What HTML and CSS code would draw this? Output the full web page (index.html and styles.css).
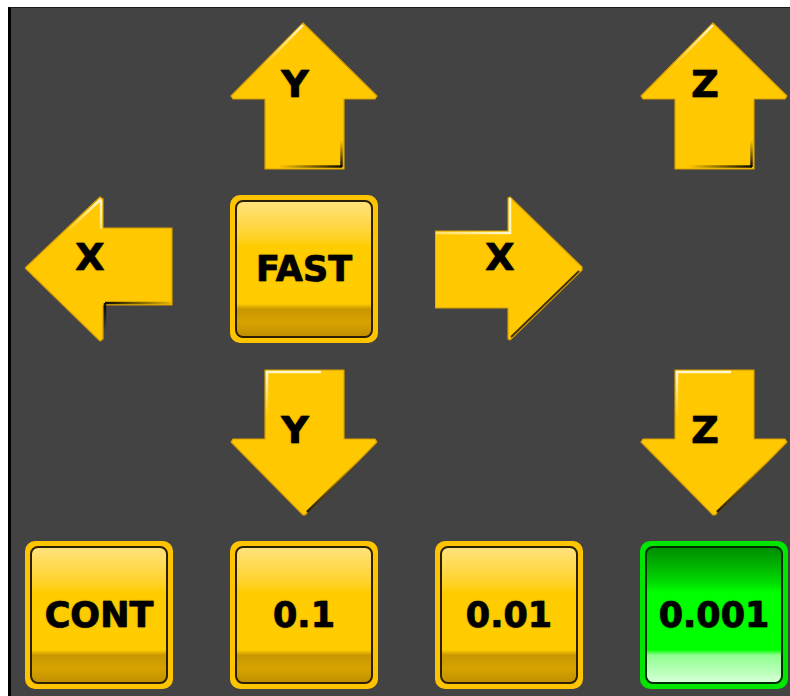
FILE: index.html
```html
<!DOCTYPE html>
<html lang="en">
<head>
    <meta charset="UTF-8">
    <meta name="viewport" content="width=device-width, initial-scale=1.0">
    <title>Jog Panel</title>
    <link rel="stylesheet" href="styles.css">
</head>
<body>
    <svg class="defs" aria-hidden="true">
      <defs>
        <linearGradient id="hlUp" gradientUnits="userSpaceOnUse" x1="72" y1="3" x2="30" y2="45">
          <stop offset="0" stop-color="#fff8d0" stop-opacity="1"/>
          <stop offset="1" stop-color="#fff8d0" stop-opacity="0"/>
        </linearGradient>
        <linearGradient id="shUpB" gradientUnits="userSpaceOnUse" x1="48" y1="0" x2="112" y2="0">
          <stop offset="0" stop-color="#000" stop-opacity="0"/>
          <stop offset="1" stop-color="#000" stop-opacity="0.95"/>
        </linearGradient>
        <linearGradient id="shUpR" gradientUnits="userSpaceOnUse" x1="0" y1="118" x2="0" y2="145">
          <stop offset="0" stop-color="#000" stop-opacity="0"/>
          <stop offset="1" stop-color="#000" stop-opacity="0.95"/>
        </linearGradient>
        <linearGradient id="hlDown" gradientUnits="userSpaceOnUse" x1="37" y1="4" x2="37" y2="50">
          <stop offset="0" stop-color="#fff8d0" stop-opacity="1"/>
          <stop offset="1" stop-color="#fff8d0" stop-opacity="0"/>
        </linearGradient>
        <linearGradient id="shDown" gradientUnits="userSpaceOnUse" x1="128" y1="94" x2="77" y2="144">
          <stop offset="0" stop-color="#000" stop-opacity="0"/>
          <stop offset="1" stop-color="#000" stop-opacity="0.85"/>
        </linearGradient>
        <linearGradient id="hlLeft" gradientUnits="userSpaceOnUse" x1="77" y1="4" x2="40" y2="38">
          <stop offset="0" stop-color="#fff8d0" stop-opacity="1"/>
          <stop offset="1" stop-color="#fff8d0" stop-opacity="0"/>
        </linearGradient>
        <linearGradient id="shLeftB" gradientUnits="userSpaceOnUse" x1="80" y1="0" x2="146" y2="0">
          <stop offset="0" stop-color="#000" stop-opacity="0.95"/>
          <stop offset="1" stop-color="#000" stop-opacity="0.1"/>
        </linearGradient>
        <linearGradient id="shLeftV" gradientUnits="userSpaceOnUse" x1="0" y1="108" x2="0" y2="136">
          <stop offset="0" stop-color="#000" stop-opacity="0.95"/>
          <stop offset="1" stop-color="#000" stop-opacity="0"/>
        </linearGradient>
        <linearGradient id="hlRight" gradientUnits="userSpaceOnUse" x1="0" y1="0" x2="76" y2="0">
          <stop offset="0" stop-color="#fff8d0" stop-opacity="0.5"/>
          <stop offset="1" stop-color="#fff8d0" stop-opacity="1"/>
        </linearGradient>
      </defs>
    </svg>

    <div class="panel">
      <div class="pad">
        <div class="cell"></div>

        <div class="cell arrow">
          <svg viewBox="0 0 148 148">
            <polygon class="body" points="73,1 147,74 145,77 114,77 114,147 35,147 35,77 3,77 1,74"/>
            <polyline class="hl" stroke="url(#hlUp)" points="28,49 72,4"/>
            <line x1="48" y1="144.5" x2="112" y2="144.5" stroke="url(#shUpB)" stroke-width="2.5"/>
            <line x1="111.5" y1="118" x2="111.5" y2="145" stroke="url(#shUpR)" stroke-width="2.5"/>
          </svg>
          <span class="label">Y</span>
        </div>

        <div class="cell"></div>

        <div class="cell arrow">
          <svg viewBox="0 0 148 148">
            <polygon class="body" points="73,1 147,74 145,77 114,77 114,147 35,147 35,77 3,77 1,74"/>
            <polyline class="hl" stroke="url(#hlUp)" points="28,49 72,4"/>
            <line x1="48" y1="144.5" x2="112" y2="144.5" stroke="url(#shUpB)" stroke-width="2.5"/>
            <line x1="111.5" y1="118" x2="111.5" y2="145" stroke="url(#shUpR)" stroke-width="2.5"/>
          </svg>
          <span class="label">Z</span>
        </div>

        <div class="cell arrow">
          <svg viewBox="0 0 148 148">
            <polygon class="body" points="0,73 75,2 78,4 78,33 147,33 147,110 78,110 78,144 75,146"/>
            <polyline class="hl" stroke="url(#hlLeft)" points="40,38 75,5 76,6 76,33"/>
            <line x1="80" y1="108" x2="146" y2="108" stroke="url(#shLeftB)" stroke-width="2.5"/>
            <line x1="80" y1="108" x2="80" y2="136" stroke="url(#shLeftV)" stroke-width="2.5"/>
          </svg>
          <span class="label">X</span>
        </div>

        <div class="cell">
          <div class="btn">
            <div class="btn-face">FAST</div>
          </div>
        </div>

        <div class="cell arrow">
          <svg viewBox="0 0 148 148">
            <polygon class="body" points="0,36 73,36 73,3 75,2 147,72 147,75 75,145 73,144 73,113 0,113"/>
            <polyline class="hl" stroke="url(#hlRight)" points="2,38 75,38 75,4"/>
            <line x1="144" y1="76" x2="76" y2="142" stroke="#000" stroke-opacity="0.75" stroke-width="1.8"/>
          </svg>
          <span class="label">X</span>
        </div>

        <div class="cell"></div>

        <div class="cell"></div>

        <div class="cell arrow">
          <svg viewBox="0 0 148 148">
            <polygon class="body" points="35,2 114,2 114,71 145,71 147,74 75,147 73,147 1,74 3,71 35,71"/>
            <polyline class="hl" stroke="url(#hlDown)" points="37,50 37,4 90,4"/>
            <line x1="128" y1="94" x2="77" y2="144" stroke="url(#shDown)" stroke-width="2.5"/>
          </svg>
          <span class="label">Y</span>
        </div>

        <div class="cell"></div>

        <div class="cell arrow">
          <svg viewBox="0 0 148 148">
            <polygon class="body" points="35,2 114,2 114,71 145,71 147,74 75,147 73,147 1,74 3,71 35,71"/>
            <polyline class="hl" stroke="url(#hlDown)" points="37,50 37,4 90,4"/>
            <line x1="128" y1="94" x2="77" y2="144" stroke="url(#shDown)" stroke-width="2.5"/>
          </svg>
          <span class="label">Z</span>
        </div>

        <div class="cell">
          <div class="btn">
            <div class="btn-face">CONT</div>
          </div>
        </div>
        <div class="cell">
          <div class="btn">
            <div class="btn-face">0.1</div>
          </div>
        </div>
        <div class="cell">
          <div class="btn">
            <div class="btn-face">0.01</div>
          </div>
        </div>
        <div class="cell">
          <div class="btn active">
            <div class="btn-face">0.001</div>
          </div>
        </div>
      </div>
    </div>
</body>
</html>
```

FILE: styles.css
```css
html, body{
  margin: 0;
  padding: 0;
  background: #ffffff;
  overflow: hidden;
}
body{
  padding: 7px 0 0 8px;
}
.defs{
  position: absolute;
  width: 0;
  height: 0;
}
.panel{
  width: 800px;
  height: 720px;
  background-color: #434343;
  border-left: 3px solid #000;
  border-top: 1px solid #1a1a1a;
}
.pad{
  display: grid;
  grid-template-columns: repeat(4, 148px);
  grid-auto-rows: 148px;
  column-gap: 57px;
  row-gap: 25px;
  padding: 14px 0 0 14px;
}
.cell{
  position: relative;
  width: 148px;
  height: 148px;
}
.arrow svg{
  display: block;
  width: 148px;
  height: 148px;
}
.arrow .body{
  fill: #ffc800;
  stroke: #d99e00;
  stroke-width: 1.2;
  stroke-linejoin: round;
}
.arrow .hl{
  fill: none;
  stroke-width: 2.5;
  stroke-linecap: round;
}
.label{
  position: absolute;
  left: 0;
  top: 0;
  width: 130px;
  height: 124px;
  display: flex;
  align-items: center;
  justify-content: center;
  font-family: "DejaVu Sans", Verdana, sans-serif;
  font-weight: bold;
  font-size: 38px;
  color: #000;
  -webkit-text-stroke: 0.6px #000;
  text-shadow: 0 0 1.5px rgba(0,0,0,0.7);
}
.btn{
  box-sizing: border-box;
  width: 148px;
  height: 148px;
  padding: 5px;
  border-radius: 10px;
  background-color: #ffc400;
}
.btn-face{
  box-sizing: border-box;
  height: 100%;
  border: 2px solid #2a1f00;
  border-radius: 8px;
  background: linear-gradient(#ffe27a 0%, #ffd84a 16%, #ffd224 27%, #ffcc00 33%, #ffcc00 76%, #c99700 80%, #d6a300 90%, #c29000 100%);
  display: flex;
  align-items: center;
  justify-content: center;
  font-family: "DejaVu Sans", Verdana, sans-serif;
  font-weight: bold;
  font-size: 35px;
  color: #000;
  -webkit-text-stroke: 0.6px #000;
  text-shadow: 0 0 1.5px rgba(0,0,0,0.7);
}
.btn.active{
  background-color: #00e600;
}
.btn.active .btn-face{
  border-color: #002a00;
  background: linear-gradient(#008f00 0%, #00b000 12%, #00dc00 26%, #00ff00 33%, #00ff00 76%, #90ff90 80%, #b8ffb8 92%, #d6ffd6 100%);
}
```
